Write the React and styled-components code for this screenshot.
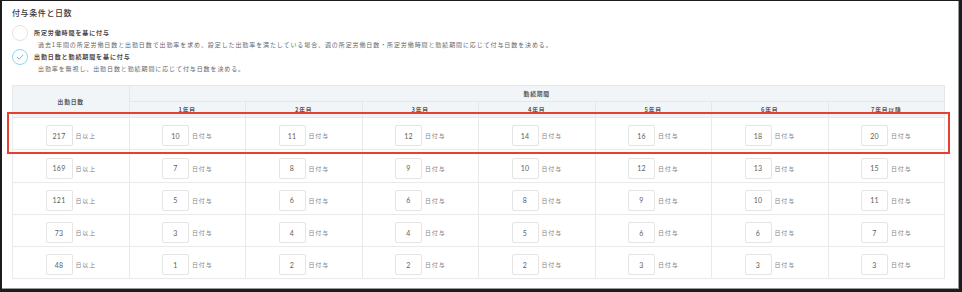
import styled, { createGlobalStyle } from "styled-components";

const GlobalStyle = createGlobalStyle`
  html, body {
    margin: 0;
    padding: 0;
    background: #1c1c1c;
  }
  body {
    font-family: "Noto Sans CJK JP", "Noto Sans", sans-serif;
  }
`;

const Frame = styled.div`
  position: relative;
  width: 962px;
  height: 292px;
  background: #1c1c1c;
  padding: 1px 0 0 2px;
  box-sizing: border-box;
`;

const Panel = styled.div`
  width: 957px;
  height: 288px;
  background: #fff;
  box-sizing: border-box;
  border-right: 1px solid #9a9a9a;
  border-bottom: 1px solid #9a9a9a;
  padding: 5px 0 0 10px;
`;

const Title = styled.h2`
  margin: 0 0 6px;
  font-size: 8px;
  line-height: 13px;
  font-weight: 500;
  letter-spacing: 0.6px;
  color: #3a3a3a;
`;

const Options = styled.div`
  display: flex;
  flex-direction: column;
`;

const Option = styled.label`
  display: flex;
  align-items: flex-start;
  gap: 6px;
  cursor: pointer;
`;

const Radio = styled.span`
  width: 16px;
  height: 16px;
  flex: none;
  box-sizing: border-box;
  border-radius: 50%;
  border: 1px solid ${(p) => (p.$checked ? "#8ad8ee" : "#e3e3e3")};
  display: flex;
  align-items: center;
  justify-content: center;
`;

const OptionText = styled.div`
  display: flex;
  flex-direction: column;
`;

const OptionLabel = styled.span`
  font-size: 6px;
  line-height: 16px;
  font-weight: 700;
  letter-spacing: 0.9px;
  color: #4a4a4a;
`;

const OptionDesc = styled.span`
  font-size: 6px;
  line-height: 8px;
  letter-spacing: 0.9px;
  color: #666;
  padding-left: 4px;
`;

const Table = styled.table`
  margin-top: 12px;
  width: 933px;
  border-collapse: collapse;
  table-layout: fixed;
`;

const HeadRow = styled.tr`
  height: 16px;
`;

const BodyRow = styled.tr`
  height: 32.3px;
`;

const Th = styled.th`
  background: #f2f5f8;
  border: 1px solid #e5e8eb;
  padding: 0;
  font-size: 5.8px;
  line-height: 8px;
  font-weight: 700;
  letter-spacing: 0.8px;
  color: #555;
  text-align: center;
  vertical-align: middle;
`;

const Td = styled.td`
  border: 1px solid #e8eaec;
  padding: 0;
  text-align: center;
  vertical-align: middle;
`;

const Field = styled.div`
  display: inline-flex;
  align-items: center;
  gap: 3px;
  vertical-align: middle;
`;

const NumBox = styled.span`
  width: 27px;
  height: 21px;
  box-sizing: border-box;
  border: 1px solid #e4e4e4;
  border-radius: 2px;
  display: flex;
  align-items: center;
  justify-content: center;
  font-family: Lato, "Noto Sans", sans-serif;
  font-size: 7px;
  color: #5e5e5e;
  letter-spacing: 0.3px;
`;

const Unit = styled.span`
  font-size: 6px;
  letter-spacing: 0.8px;
  color: #858585;
`;

const Highlight = styled.div`
  position: absolute;
  left: 7px;
  top: 112px;
  width: 943px;
  height: 42px;
  box-sizing: border-box;
  border: 2px solid #e8402f;
  pointer-events: none;
`;

const Check = () => (
  <svg width="10" height="10" viewBox="0 0 10 10" fill="none">
    <path
      d="M2.2 5.2 L4.2 7.1 L7.9 3.1"
      stroke="#5cc6e4"
      strokeWidth="1"
      strokeLinecap="round"
      strokeLinejoin="round"
    />
  </svg>
);

const years = ["1年目", "2年目", "3年目", "4年目", "5年目", "6年目", "7年目以降"];

const rows = [
  { days: 217, grants: [10, 11, 12, 14, 16, 18, 20] },
  { days: 169, grants: [7, 8, 9, 10, 12, 13, 15] },
  { days: 121, grants: [5, 6, 6, 8, 9, 10, 11] },
  { days: 73, grants: [3, 4, 4, 5, 6, 6, 7] },
  { days: 48, grants: [1, 2, 2, 2, 3, 3, 3] },
];

export default function App() {
  return (
    <>
      <GlobalStyle />
      <Frame>
        <Panel>
          <Title>付与条件と日数</Title>
          <Options>
            <Option>
              <Radio />
              <OptionText>
                <OptionLabel>所定労働時間を基に付与</OptionLabel>
                <OptionDesc>
                  過去1年間の所定労働日数と出勤日数で出勤率を求め、設定した出勤率を満たしている場合、週の所定労働日数・所定労働時間と勤続期間に応じて付与日数を決める。
                </OptionDesc>
              </OptionText>
            </Option>
            <Option>
              <Radio $checked>
                <Check />
              </Radio>
              <OptionText>
                <OptionLabel>出勤日数と勤続期間を基に付与</OptionLabel>
                <OptionDesc>
                  出勤率を無視し、出勤日数と勤続期間に応じて付与日数を決める。
                </OptionDesc>
              </OptionText>
            </Option>
          </Options>
          <Table>
            <thead>
              <HeadRow>
                <Th rowSpan={2}>出勤日数</Th>
                <Th colSpan={7}>勤続期間</Th>
              </HeadRow>
              <HeadRow>
                {years.map((y) => (
                  <Th key={y}>{y}</Th>
                ))}
              </HeadRow>
            </thead>
            <tbody>
              {rows.map((r) => (
                <BodyRow key={r.days}>
                  <Td>
                    <Field>
                      <NumBox>{r.days}</NumBox>
                      <Unit>日以上</Unit>
                    </Field>
                  </Td>
                  {r.grants.map((g, i) => (
                    <Td key={i}>
                      <Field>
                        <NumBox>{g}</NumBox>
                        <Unit>日付与</Unit>
                      </Field>
                    </Td>
                  ))}
                </BodyRow>
              ))}
            </tbody>
          </Table>
        </Panel>
        <Highlight />
      </Frame>
    </>
  );
}
